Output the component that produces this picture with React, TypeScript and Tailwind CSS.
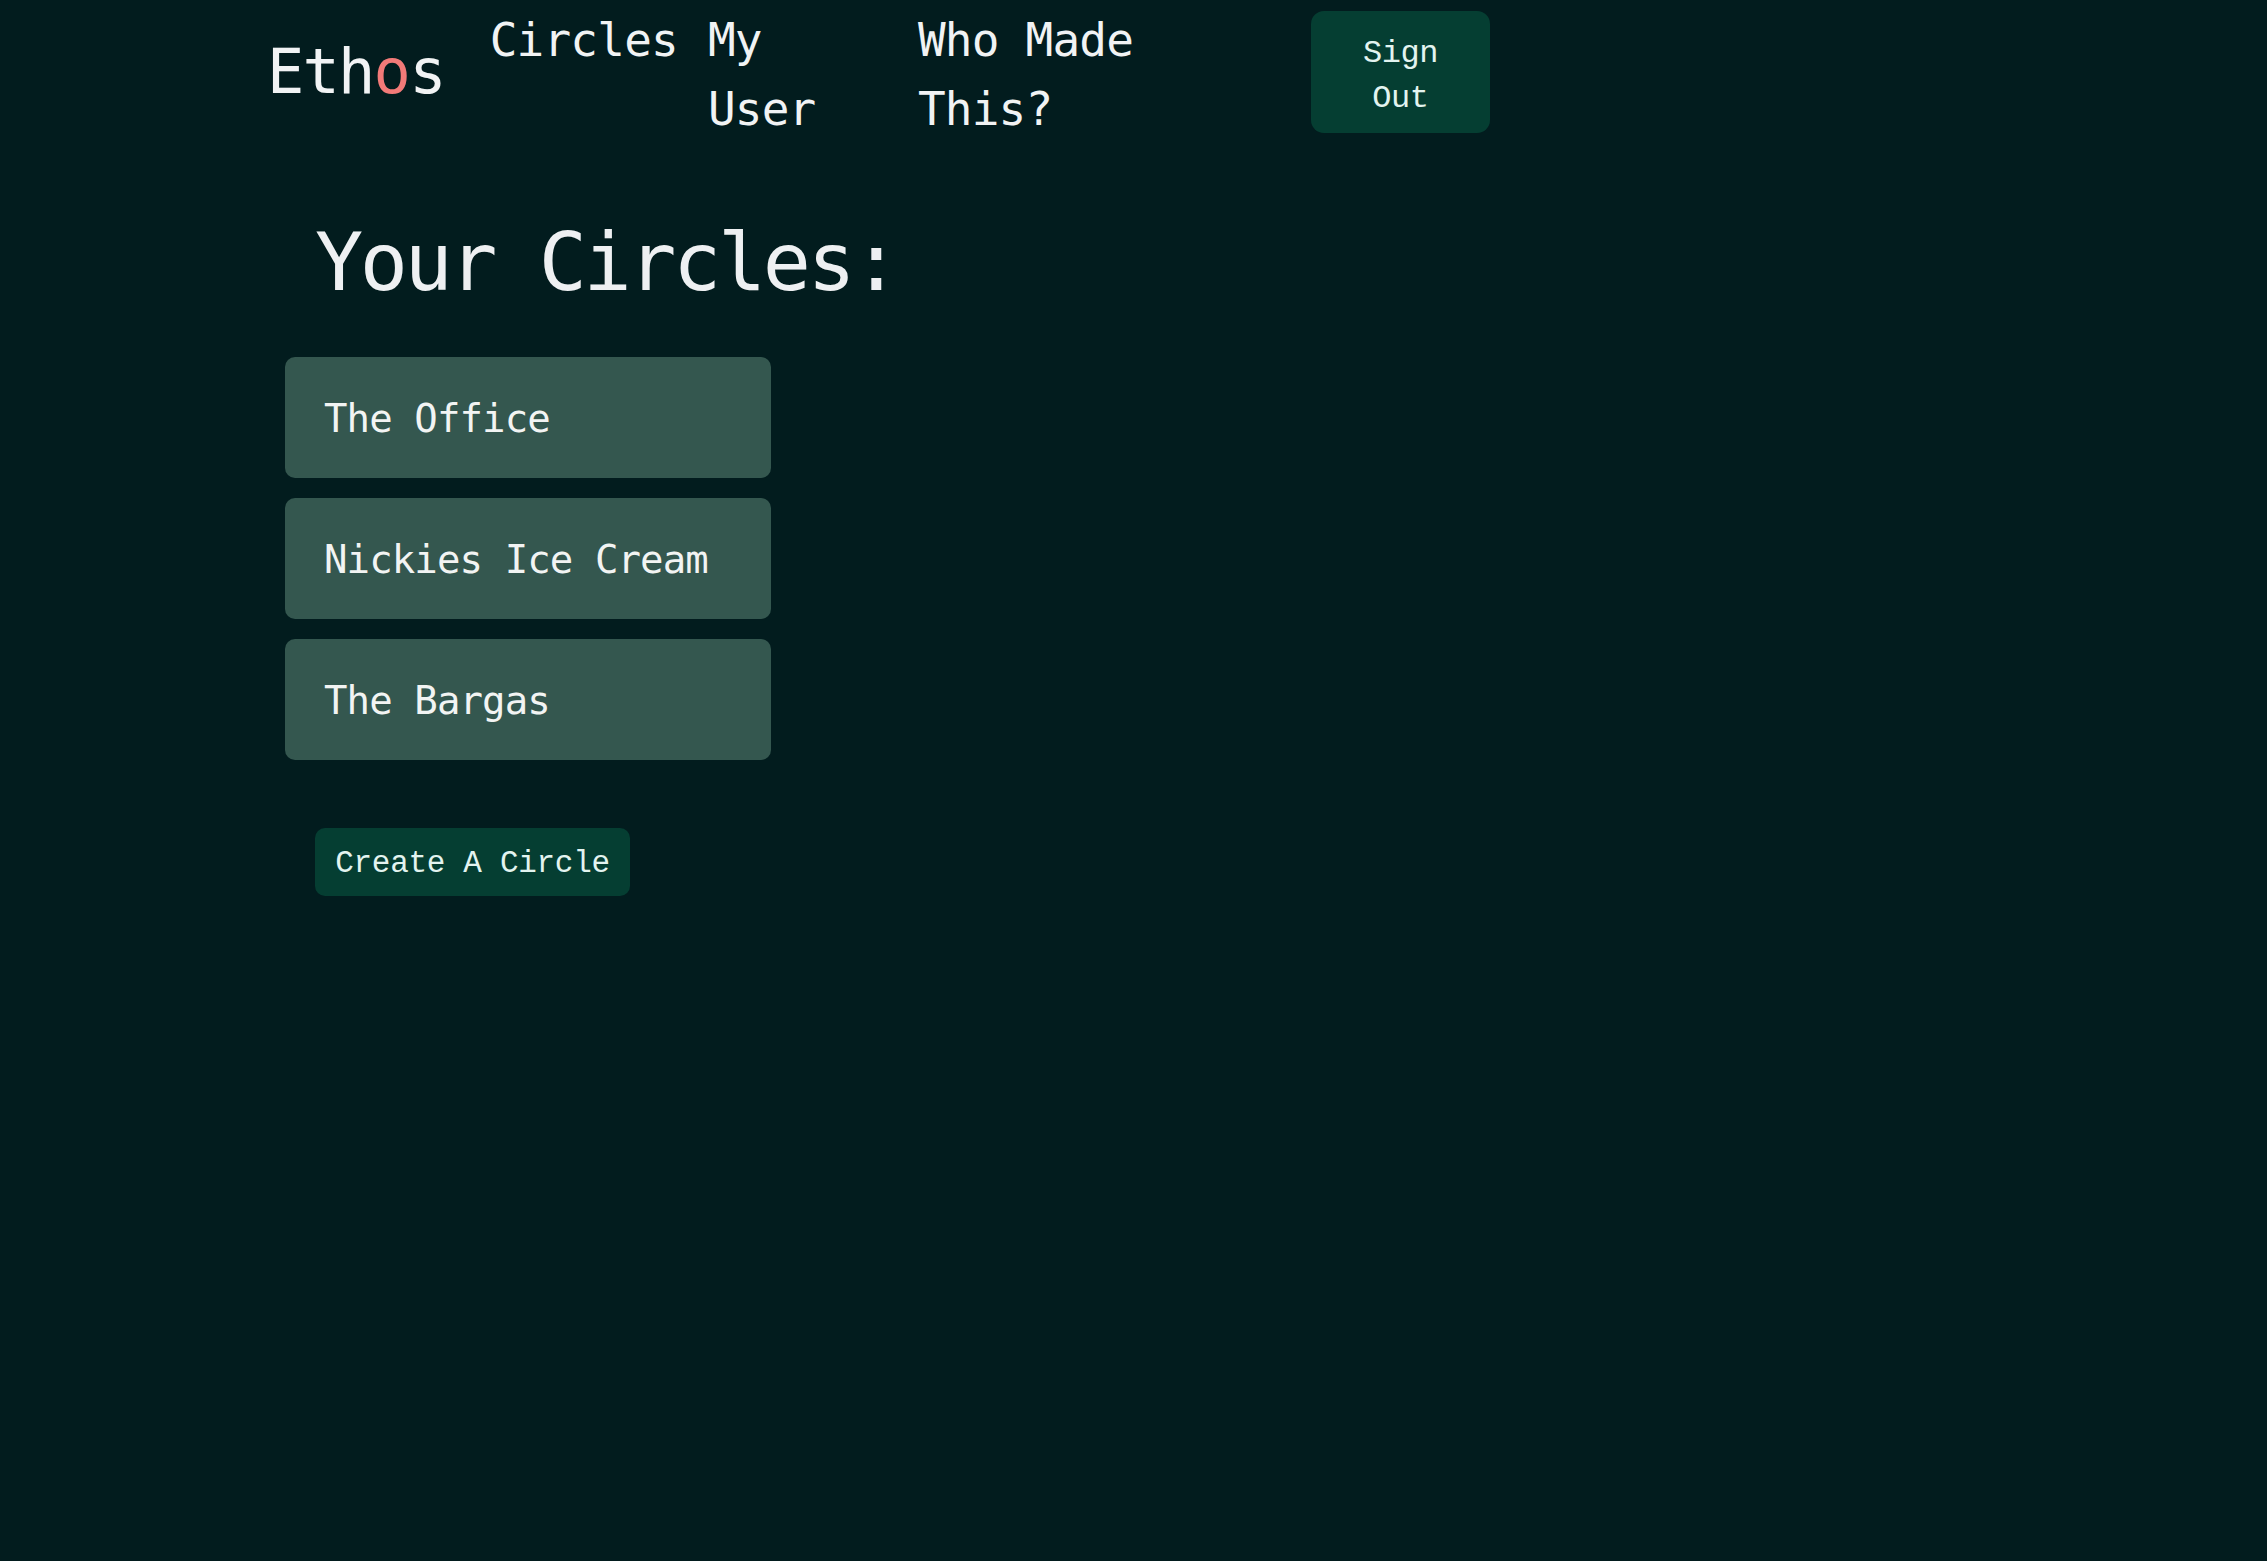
const circles = ["The Office", "Nickies Ice Cream", "The Bargas"];

function NavBar() {
  return (
    <nav className="flex h-[144px] items-center pl-[267px] font-['DejaVu_Sans_Mono',monospace] text-[#f1f3f4]">
      <a className="text-[62px] leading-none tracking-[-1.8px]">
        Eth<span className="text-[#f27a78]">o</span>s
      </a>

      <div className="ml-[45px] mt-[6px] flex gap-[30px] text-[46px] leading-[69px] tracking-[-0.8px]">
        <a>Circles</a>
        <a className="w-[180px]">My User</a>
        <a className="w-[260px]">Who Made This?</a>
      </div>

      <button className="ml-[133px] h-[122px] w-[179px] rounded-[13px] bg-[#053e32] px-[20px] pt-[8px] text-center font-['Liberation_Mono',monospace] text-[32px] leading-[45px] tracking-[-0.5px] text-[#e3f4f0]">
        Sign Out
      </button>
    </nav>
  );
}

export default function App() {
  return (
    <div className="min-h-[1561px] w-full bg-[#021c1e]">
      <NavBar />

      <main className="ml-[285px] mt-[79px]">
        <h1 className="pl-[30px] font-['DejaVu_Sans_Mono',monospace] text-[80px] leading-[80px] tracking-[-3.4px] text-[#eef0f2]">
          Your Circles:
        </h1>

        <div className="mt-[54px] flex w-[486px] flex-col gap-[20px]">
          {circles.map((name) => (
            <div
              key={name}
              className="flex h-[121px] items-center rounded-[10px] bg-[#34574f] pl-[39px] pt-[3px] font-['DejaVu_Sans_Mono',monospace] text-[39px] tracking-[-0.9px] text-[#f2f4f3]"
            >
              {name}
            </div>
          ))}
        </div>

        <button className="ml-[30px] mt-[68px] h-[68px] w-[315px] rounded-[10px] bg-[#053e32] pt-[5px] text-center font-['Liberation_Mono',monospace] text-[31px] tracking-[-0.3px] text-[#e3f4f0]">
          Create A Circle
        </button>
      </main>
    </div>
  );
}
